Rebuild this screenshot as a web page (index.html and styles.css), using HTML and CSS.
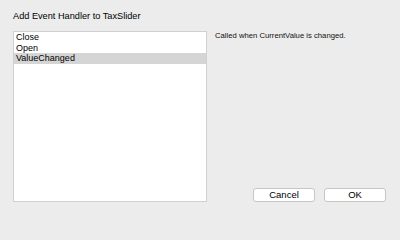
FILE: index.html
```html
<!DOCTYPE html>
<html>
<head>
<meta charset="utf-8">
<link rel="stylesheet" href="styles.css">
</head>
<body>
<div class="dialog">
  <div class="title">Add Event Handler to TaxSlider</div>
  <div class="main">
    <div class="list">
      <div class="row">Close</div>
      <div class="row">Open</div>
      <div class="row selected">ValueChanged</div>
    </div>
    <div class="side">
      <div class="desc">Called when CurrentValue is changed.</div>
      <div class="buttons">
        <button class="btn">Cancel</button>
        <button class="btn">OK</button>
      </div>
    </div>
  </div>
</div>
</body>
</html>
```

FILE: styles.css
```css
html, body {
  margin: 0;
  padding: 0;
  background: #ececec;
  font-family: "Liberation Sans", Arial, sans-serif;
  color: #000;
}
.dialog {
  width: 400px;
  height: 215px;
  box-sizing: border-box;
  padding: 11px 14px 13px 13px;
  display: flex;
  flex-direction: column;
}
.title {
  font-size: 9.2px;
  line-height: 11px;
  height: 11px;
  margin-bottom: 9px;
}
.main {
  flex: 1;
  display: flex;
  gap: 8px;
  min-height: 0;
}
.list {
  width: 194px;
  box-sizing: border-box;
  background: #fff;
  border: 1px solid #d0d0d0;
}
.row {
  font-size: 9px;
  line-height: 10.5px;
  height: 10.5px;
  padding-left: 2px;
}
.row.selected {
  background: #d5d5d5;
}
.side {
  flex: 1;
  display: flex;
  flex-direction: column;
  justify-content: space-between;
}
.desc {
  font-size: 7.7px;
  line-height: 10px;
  color: #111;
}
.buttons {
  display: flex;
  justify-content: flex-end;
  gap: 9px;
}
.btn {
  width: 62px;
  height: 14px;
  box-sizing: border-box;
  padding: 0;
  margin: 0;
  background: #fff;
  border: 1px solid #c6c6c6;
  border-radius: 3px;
  font-family: "Liberation Sans", Arial, sans-serif;
  font-size: 9.5px;
  line-height: 12px;
  color: #000;
}
```
